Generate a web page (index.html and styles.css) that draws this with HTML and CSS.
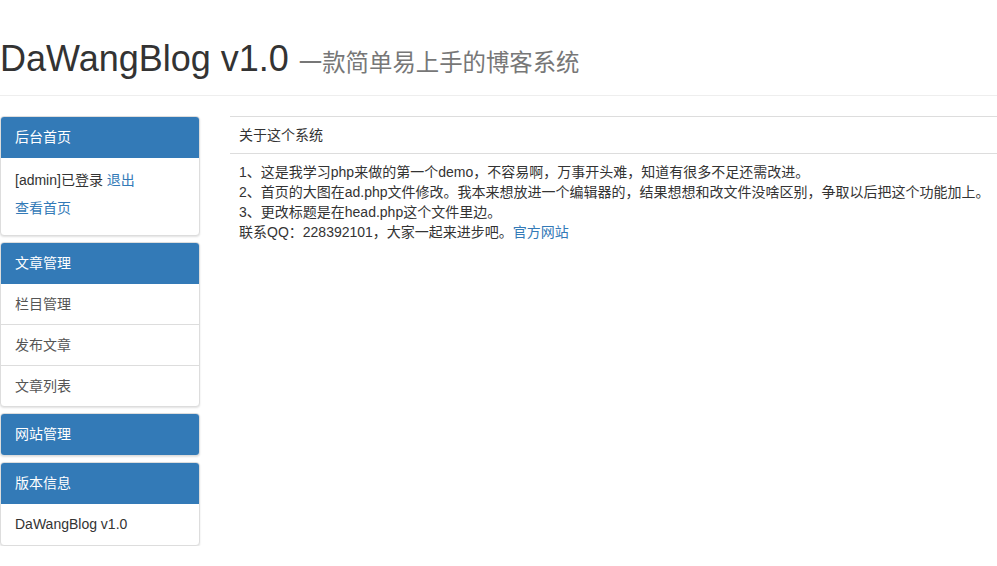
FILE: index.html
```html
<!DOCTYPE html>
<html lang="zh-CN">
<head>
<meta charset="utf-8">
<title>DaWangBlog v1.0</title>
<link rel="stylesheet" href="styles.css">
</head>
<body>
<header class="page-header">
  <h1 class="site-title">DaWangBlog v1.0 <small class="subtitle">一款简单易上手的博客系统</small></h1>
</header>
<div class="layout">
  <aside class="sidebar">
    <div class="panel">
      <div class="panel-heading">后台首页</div>
      <div class="panel-body">
        <div class="body-line">[admin]已登录 <a href="#" class="link">退出</a></div>
        <div class="body-line"><a href="#" class="link">查看首页</a></div>
      </div>
    </div>
    <div class="panel">
      <div class="panel-heading">文章管理</div>
      <ul class="list-group">
        <li class="list-item">栏目管理</li>
        <li class="list-item">发布文章</li>
        <li class="list-item">文章列表</li>
      </ul>
    </div>
    <div class="panel">
      <div class="panel-heading">网站管理</div>
    </div>
    <div class="panel">
      <div class="panel-heading">版本信息</div>
      <div class="panel-body version">DaWangBlog v1.0</div>
    </div>
  </aside>
  <main class="main">
    <table class="info-table">
      <thead>
        <tr><th class="th">关于这个系统</th></tr>
      </thead>
      <tbody>
        <tr><td class="td">1、这是我学习php来做的第一个demo，不容易啊，万事开头难，知道有很多不足还需改进。<br>2、首页的大图在ad.php文件修改。我本来想放进一个编辑器的，结果想想和改文件没啥区别，争取以后把这个功能加上。<br>3、更改标题是在head.php这个文件里边。<br>联系QQ：228392101，大家一起来进步吧。<a href="#" class="link">官方网站</a></td></tr>
      </tbody>
    </table>
  </main>
</div>
</body>
</html>
```
FILE: styles.css
```css
* { box-sizing: border-box; }
html, body { margin: 0; padding: 0; background: #fff; }
body {
  font-family: "Liberation Sans", "Noto Sans CJK SC", sans-serif;
  font-size: 14px;
  line-height: 20px;
  color: #333;
  overflow: hidden;
}
.link { color: #337ab7; text-decoration: none; }

.page-header {
  margin: 0 0 20px;
  padding: 39px 0 9px;
  border-bottom: 1px solid #eee;
  height: 96px;
}
.site-title {
  margin: 0;
  font-size: 36px;
  font-weight: 400;
  line-height: 39px;
  height: 39px;
  color: #333;
  white-space: nowrap;
}
.subtitle {
  font-size: 65%;
  line-height: 1;
  color: #777;
  font-weight: 400;
}

.layout {
  display: flex;
  gap: 30px;
  align-items: flex-start;
}
.sidebar {
  width: 200px;
  flex: none;
  display: flex;
  flex-direction: column;
  gap: 6px;
}
.panel {
  background: #fff;
  border: 1px solid #ddd;
  border-radius: 4px;
  box-shadow: 0 1px 2px rgba(0,0,0,.12);
  overflow: hidden;
}
.panel-heading {
  background: #337ab7;
  color: #fff;
  padding: 11px 15px 11px;
  line-height: 20px;
  margin: -1px -1px 0;
}
.panel-body {
  padding: 8px 14px 13px;
}
.body-line { line-height: 28px; }
.panel-body.version {
  padding: 10px 14px 11px;
  line-height: 20px;
}
.list-group {
  list-style: none;
  margin: 0;
  padding: 0;
}
.list-item {
  padding: 10px 14px;
  line-height: 20px;
  color: #555;
  border-top: 1px solid #ddd;
}
.list-item:first-child { border-top: none; }

.main {
  flex: 1;
  padding-top: 0;
}
.info-table {
  width: 100%;
  border-collapse: collapse;
}
.th {
  text-align: left;
  font-weight: 400;
  font-size: 14px;
  padding: 8px 9px;
  line-height: 20px;
  border-top: 1px solid #ddd;
  border-bottom: 1px solid #ddd;
}
.td {
  padding: 8px 9px;
  font-size: 14px;
  line-height: 20px;
  white-space: nowrap;
}
```
